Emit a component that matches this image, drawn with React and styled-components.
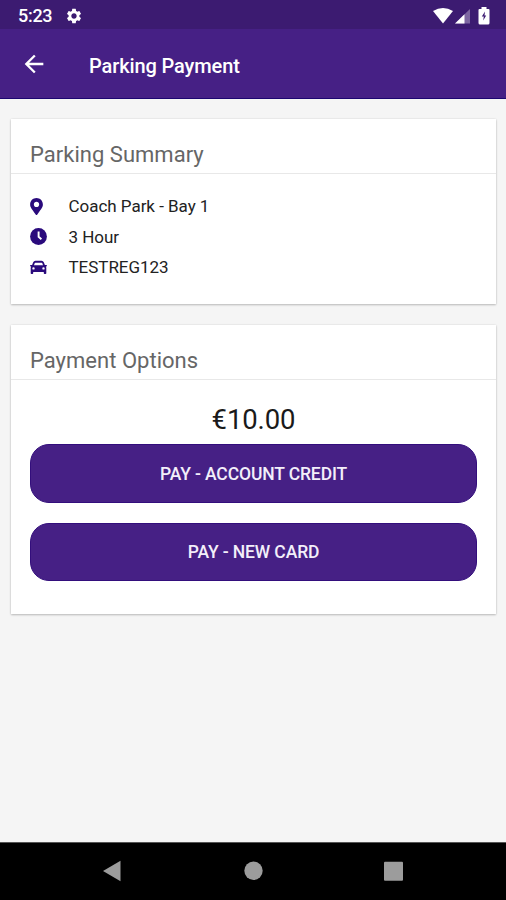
import React from 'react'
import styled, { createGlobalStyle } from 'styled-components'
import { FaMapMarkerAlt } from 'react-icons/fa'
import { MdArrowBack, MdSettings } from 'react-icons/md'

const GlobalStyle = createGlobalStyle`
  * {
    box-sizing: border-box;
  }
  body {
    margin: 0;
    background: #f5f5f5;
    font-family: Roboto, sans-serif;
  }
`

const Screen = styled.div`
  width: 506px;
  height: 900px;
  display: flex;
  flex-direction: column;
  overflow: hidden;
`

const StatusBar = styled.div`
  height: 29px;
  flex: none;
  display: flex;
  align-items: center;
  padding: 3px 16px 0 18px;
  background: #3c1b71;
  color: #fff;
  svg {
    display: block;
  }
`

const Time = styled.span`
  width: 47px;
  font-size: 18px;
  font-weight: 500;
  line-height: 20px;
  letter-spacing: -0.3px;
`

const StatusIcons = styled.div`
  display: flex;
  align-items: center;
  gap: 2px;
  margin-left: auto;
  svg:last-child {
    margin-left: 5px;
  }
`

const AppBar = styled.header`
  height: 70px;
  flex: none;
  display: flex;
  align-items: center;
  padding: 2px 20px 0;
  background: #462085;
  border-bottom: 1px solid #1c0670;
  color: #fff;
`

const BackButton = styled.button`
  width: 69px;
  padding: 0 0 2px;
  border: 0;
  background: none;
  color: inherit;
  svg {
    display: block;
  }
`

const Title = styled.h1`
  margin: 0;
  padding-top: 2px;
  font-size: 20px;
  font-weight: 500;
  line-height: 24px;
  letter-spacing: -0.12px;
`

const Content = styled.main`
  flex: 1;
  display: flex;
  flex-direction: column;
  gap: 21px;
  padding: 20px 10px 0 11px;
`

const Card = styled.section`
  height: ${(props) => props.$height}px;
  background: #fff;
  box-shadow: 0 1px 2px rgba(0, 0, 0, 0.22), 0 0 2px rgba(0, 0, 0, 0.1);
`

const CardTitle = styled.h2`
  height: 55px;
  margin: 0;
  padding: 22px 19px 0;
  border-bottom: 1px solid #e8e8e8;
  color: #666;
  font-size: 22px;
  font-weight: 400;
  line-height: 28px;
  letter-spacing: 0.02px;
`

const Details = styled.ul`
  margin: 0;
  padding: 17px 19px 0;
  list-style: none;
`

const Detail = styled.li`
  height: 30.5px;
  display: flex;
  align-items: center;
  color: #222;
  font-size: 17px;
  letter-spacing: -0.03px;
  svg {
    color: #2a0a7c;
  }
`

const DetailIcon = styled.span`
  width: 38.5px;
  display: flex;
`

const PinIcon = styled(FaMapMarkerAlt)`
  width: 13px;
  height: 17px;
`

const Payment = styled.div`
  display: flex;
  flex-direction: column;
  gap: 20px;
  padding: 22px 19px 0;
`

const Amount = styled.p`
  margin: 0 0 -14px;
  color: #1a1a1a;
  font-size: 27.5px;
  line-height: 36px;
  text-align: center;
  letter-spacing: -0.1px;
`

const PayButton = styled.button`
  height: 58.5px;
  padding: 1px 0 0;
  border: 1px solid #330e7c;
  border-radius: 19px;
  background: #462085;
  color: #f3effa;
  font-family: inherit;
  font-size: 17.5px;
  font-weight: 500;
  letter-spacing: -0.12px;
`

const NavBar = styled.nav`
  height: 58px;
  flex: none;
  display: flex;
  justify-content: center;
  padding-top: 17px;
  background: #000;
  border-top: 1px solid #555;
`

const ClockIcon = () => (
    <svg width='17' height='17' viewBox='0 0 17 17'>
        <circle cx='8.5' cy='8.5' r='8.4' fill='currentColor'/>
        <path d='M8.6 3.6V8.8L11.4 11.2' fill='none' stroke='#fff' strokeWidth='1.9'/>
    </svg>
)

const CarIcon = () => (
    <svg width='17' height='15' viewBox='0 0 17 15' fill='currentColor'>
        <path fillRule='evenodd' d='M5.4 .8H11.6Q13.2 .8 13.8 2.3L14.9 5H16.2Q17 5 17 5.8T16.2 6.6H15.8Q16.3 7.2 16.3 8V13.2Q16.3 14 15.5 14H14.6Q13.8 14 13.8 13.2V12H3.2V13.2Q3.2 14 2.4 14H1.5Q.7 14 .7 13.2V8Q.7 7.2 1.2 6.6H.8Q0 6.6 0 5.8T.8 5H2.1L3.2 2.3Q3.8 .8 5.4 .8ZM5.4 2.7Q5 2.7 4.8 3.1L4 5.3H13L12.2 3.1Q12 2.7 11.6 2.7ZM3.5 7.2A1.2 1.2 0 1 0 3.5 9.6 1.2 1.2 0 1 0 3.5 7.2ZM13.5 7.2A1.2 1.2 0 1 0 13.5 9.6 1.2 1.2 0 1 0 13.5 7.2Z'/>
    </svg>
)

const App = () => {
    return (
        <Screen>
            <GlobalStyle/>
            <StatusBar>
                <Time>5:23</Time>
                <MdSettings size={18}/>
                <StatusIcons>
                    <svg width='20' height='16' viewBox='0 0 20 16'>
                        <path d='M0 3Q10-3 20 3L10 15.5Z' fill='#fff'/>
                    </svg>
                    <svg width='16' height='16' viewBox='0 0 16 16'>
                        <path d='M15 1V15.5H0Z' fill='#7d66a1'/>
                        <path d='M9.5 6.3V15.5H0Z' fill='#fff'/>
                    </svg>
                    <svg width='12' height='18' viewBox='0 0 12 18'>
                        <path d='M3.5 0H8.5V2H10.5Q11.5 2 11.5 3V16Q11.5 17.5 10 17.5H2Q.5 17.5.5 16V3Q.5 2 1.5 2H3.5Z' fill='#fff'/>
                        <path d='M7 4.5 3.8 9.5H5.8L5.2 13.5 8.2 8.5H6.5Z' fill='#3c1b71'/>
                    </svg>
                </StatusIcons>
            </StatusBar>
            <AppBar>
                <BackButton aria-label='Back'><MdArrowBack size={28}/></BackButton>
                <Title>Parking Payment</Title>
            </AppBar>
            <Content>
                <Card $height={185}>
                    <CardTitle>Parking Summary</CardTitle>
                    <Details>
                        <Detail>
                            <DetailIcon><PinIcon/></DetailIcon>
                            Coach Park - Bay 1
                        </Detail>
                        <Detail>
                            <DetailIcon><ClockIcon/></DetailIcon>
                            3 Hour
                        </Detail>
                        <Detail>
                            <DetailIcon><CarIcon/></DetailIcon>
                            TESTREG123
                        </Detail>
                    </Details>
                </Card>
                <Card $height={289}>
                    <CardTitle>Payment Options</CardTitle>
                    <Payment>
                        <Amount>€10.00</Amount>
                        <PayButton>PAY - ACCOUNT CREDIT</PayButton>
                        <PayButton>PAY - NEW CARD</PayButton>
                    </Payment>
                </Card>
            </Content>
            <NavBar>
                <svg width='304' height='24' viewBox='101 860 304 24' fill='#9c9c9c'>
                    <path d='M103 871 120.5 860.7V881.3Z'/>
                    <circle cx='253.5' cy='870.8' r='9.2'/>
                    <rect x='384' y='861.7' width='19' height='19' rx='1'/>
                </svg>
            </NavBar>
        </Screen>
    )
}

export default App;
